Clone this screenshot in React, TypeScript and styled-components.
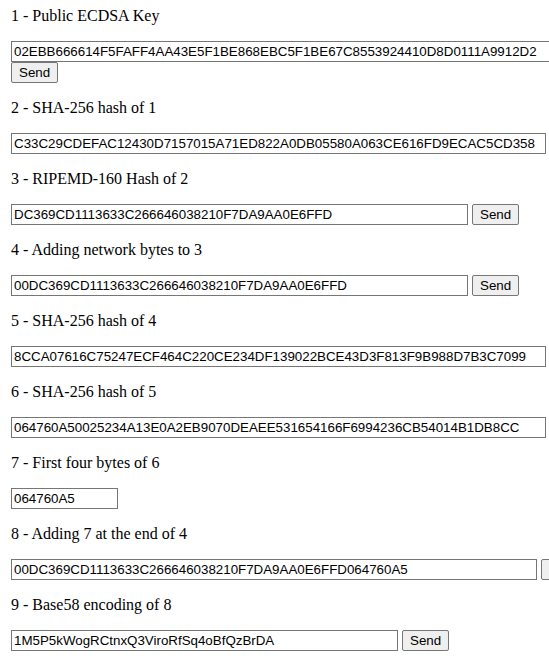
import React from 'react';
import styled, { createGlobalStyle } from 'styled-components';

const GlobalStyle = createGlobalStyle`
  html, body {
    margin: 0;
    padding: 0;
    overflow: hidden;
    background: #fff;
  }
`;

const Page = styled.div`
  padding: 7px 0 0 11px;
  font-family: "Liberation Serif", "Times New Roman", serif;
  color: #000;
`;

const Step = styled.section`
  display: flex;
  flex-direction: column;
  align-items: flex-start;
  margin-bottom: 16px;
`;

const Label = styled.p`
  margin: 0 0 16px;
  font-size: 16px;
  line-height: 18px;
  white-space: nowrap;
`;

const Row = styled.div`
  display: flex;
  gap: 4px;
  align-items: flex-start;
  flex-wrap: nowrap;
`;

const Field = styled.input<{ $width: number }>`
  box-sizing: border-box;
  flex: none;
  width: ${(p) => p.$width}px;
  height: 21px;
  margin: 0;
  padding: 1px 2px;
  border: 1px solid #767676;
  border-radius: 0;
  background: #fff;
  color: #000;
  font-family: "Liberation Sans", Arial, sans-serif;
  font-size: 13.333px;
  outline: none;
`;

const SendButton = styled.button`
  box-sizing: border-box;
  flex: none;
  height: 21px;
  margin: 0;
  padding: 1px 7px;
  border: 1px solid #767676;
  border-radius: 2px;
  background: #efefef;
  color: #000;
  font-family: "Liberation Sans", Arial, sans-serif;
  font-size: 13.333px;
  line-height: 15px;
  cursor: pointer;
`;

type StepData = {
  label: string;
  value: string;
  width: number;
  send?: boolean;
  stacked?: boolean;
};

const steps: StepData[] = [
  { label: '1 - Public ECDSA Key', value: '02EBB666614F5FAFF4AA43E5F1BE868EBC5F1BE67C8553924410D8D0111A9912D2', width: 560, send: true, stacked: true },
  { label: '2 - SHA-256 hash of 1', value: 'C33C29CDEFAC12430D7157015A71ED822A0DB05580A063CE616FD9ECAC5CD358', width: 535 },
  { label: '3 - RIPEMD-160 Hash of 2', value: 'DC369CD1113633C266646038210F7DA9AA0E6FFD', width: 457, send: true },
  { label: '4 - Adding network bytes to 3', value: '00DC369CD1113633C266646038210F7DA9AA0E6FFD', width: 457, send: true },
  { label: '5 - SHA-256 hash of 4', value: '8CCA07616C75247ECF464C220CE234DF139022BCE43D3F813F9B988D7B3C7099', width: 535 },
  { label: '6 - SHA-256 hash of 5', value: '064760A50025234A13E0A2EB9070DEAEE531654166F6994236CB54014B1DB8CC', width: 535 },
  { label: '7 - First four bytes of 6', value: '064760A5', width: 107 },
  { label: '8 - Adding 7 at the end of 4', value: '00DC369CD1113633C266646038210F7DA9AA0E6FFD064760A5', width: 526, send: true },
  { label: '9 - Base58 encoding of 8', value: '1M5P5kWogRCtnxQ3ViroRfSq4oBfQzBrDA', width: 387, send: true },
];

export default function App() {
  return (
    <>
      <GlobalStyle />
      <Page>
        {steps.map((s) =>
          s.stacked ? (
            <Step key={s.label}>
              <Label>{s.label}</Label>
              <Field $width={s.width} value={s.value} readOnly />
              <SendButton type="button">Send</SendButton>
            </Step>
          ) : (
            <Step key={s.label}>
              <Label>{s.label}</Label>
              <Row>
                <Field $width={s.width} value={s.value} readOnly />
                {s.send && <SendButton type="button">Send</SendButton>}
              </Row>
            </Step>
          )
        )}
      </Page>
    </>
  );
}
